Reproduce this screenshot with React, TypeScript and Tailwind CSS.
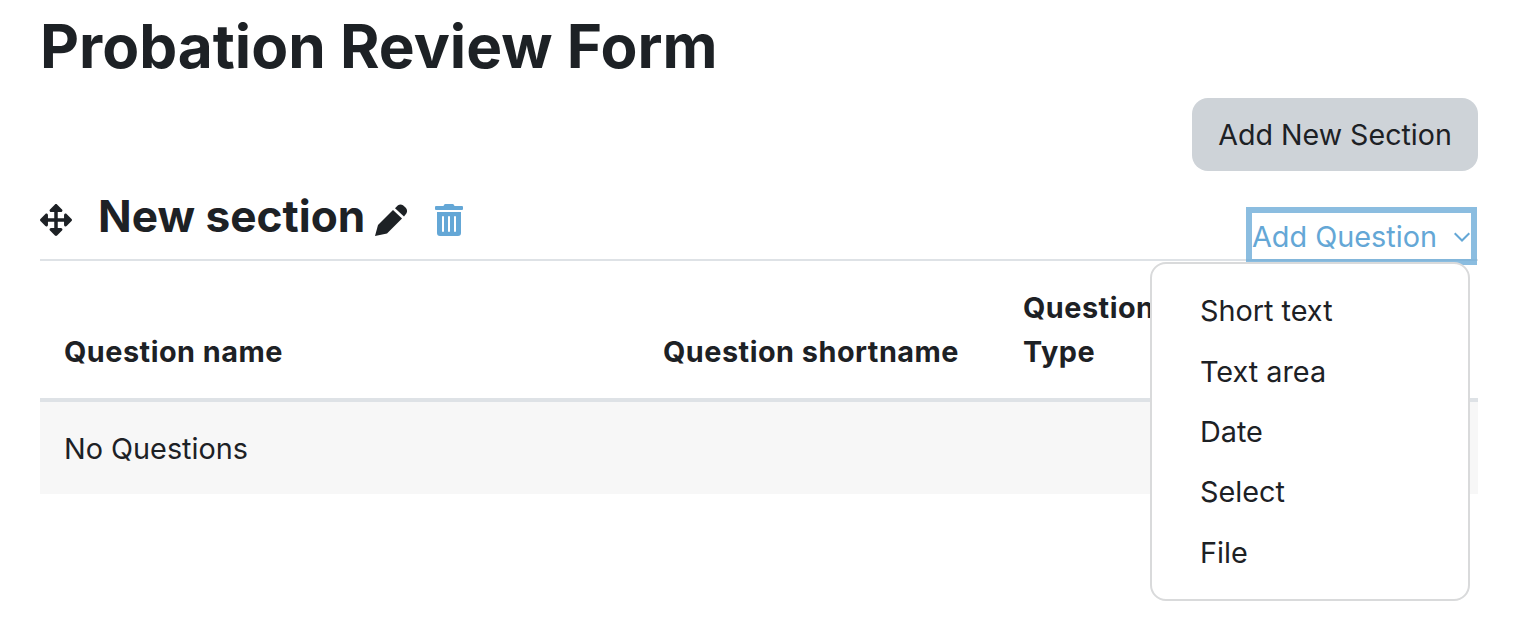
import { FaArrowsAlt, FaTrashAlt } from "react-icons/fa";

const items = ["Short text", "Text area", "Date", "Select", "File"];

export default function App() {
  return (
    <div className="h-[636px] w-[1518px] overflow-hidden bg-white px-10 font-['Inter',sans-serif] text-[28.8px] leading-[42px] text-[#1d2125]">
      <h1 className="h-[98px] pt-[14px] text-[60.3px] leading-[66px] font-bold tracking-normal">Probation Review Form</h1>
      <div className="flex justify-end">
        <button className="h-[73px] w-[286px] rounded-[16px] bg-[#ced3d8] text-center text-[28.6px]">Add New Section</button>
      </div>
      <div className="relative mt-[14px] flex h-[76px] items-start border-b-2 border-[#dee2e6]">
        <FaArrowsAlt className="mt-[19px] h-[32px] w-[32px]" />
        <h3 className="ml-[26px] mt-[2px] text-[44.2px] leading-[58px] font-bold">New section</h3>
        <svg viewBox="0 0 33 32" fill="currentColor" className="ml-[10px] mt-[19px] h-[32px] w-[33px]">
          <path d="M0 32 3 21 18 6 27 14.5 12 29.5Z" />
          <path d="M20 4.3 23 1.2Q25.500-.3 28 1.200L31 4Q33 6.800 31.300 9.500L29 12.500Z" />
        </svg>
        <FaTrashAlt className="ml-[27px] mt-[17px] h-[36px] w-[28px] text-[#64a7d6]" />
        <div className="absolute right-[1px] top-[22px] flex h-[58px] w-[231px] items-center justify-between border-[6px] border-[#64a7d6bf] pr-[1px] text-[#64a7d6]">
          <span className="mt-[2px]">Add Question</span>
          <svg width="16" height="10" viewBox="0 0 16 10" fill="none" stroke="currentColor" strokeWidth="2" className="mt-[2px]"><path d="M.7 1.2 8 8.5l7.3-7.3" /></svg>
        </div>
      </div>
      <div className="relative">
        <div className="absolute left-[1110px] top-[1px] z-10 flex h-[339px] w-[320px] flex-col rounded-[16px] border-2 border-[#d9dadb] bg-white pl-[48px] pt-[17.3px]">
          {items.map((t) => (
            <div key={t} className="h-[60.4px] leading-[60px]">{t}</div>
          ))}
        </div>
        <div className="grid h-[141px] grid-cols-[599px_360px_1fr] items-end border-b-4 border-[#dee2e6] px-6 pb-[25px] font-bold tracking-[0.5px]">
          <div>Question name</div>
          <div>Question shortname</div>
          <div className="mb-[-1px] leading-[44px]">Question<br />Type</div>
        </div>
        <div className="flex h-[92px] items-center bg-[#f7f7f7] px-6 pt-[2px]">No Questions</div>
      </div>
    </div>
  );
}
